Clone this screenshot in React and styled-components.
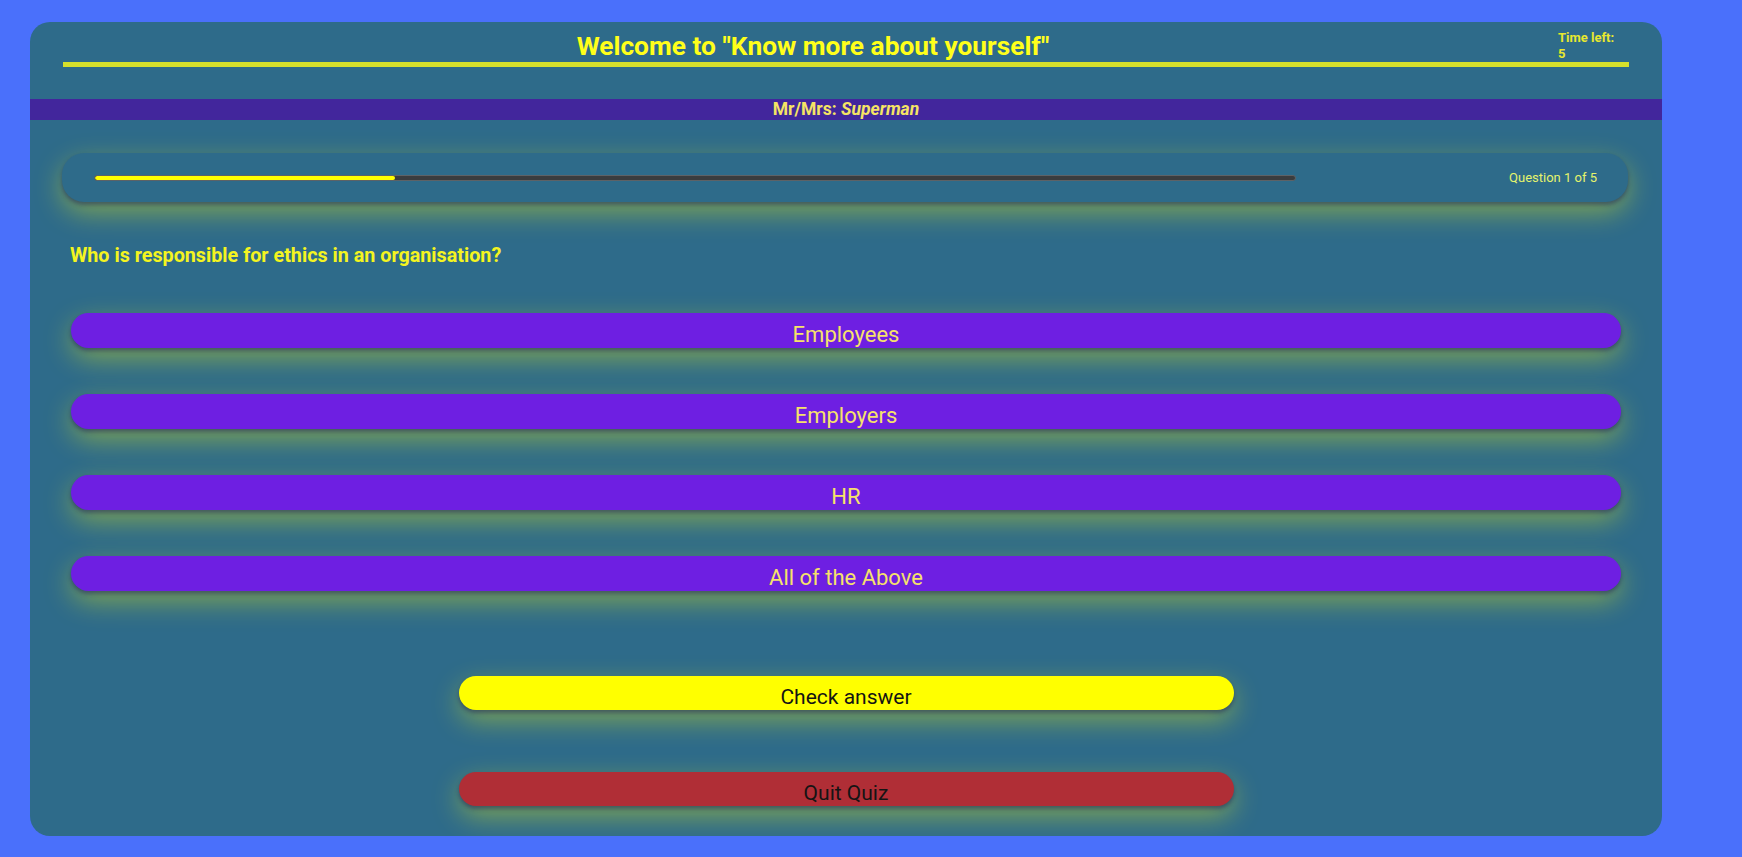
import React from 'react';
import styled, { createGlobalStyle } from 'styled-components';

const GlobalStyle = createGlobalStyle`
  body {
    margin: 0;
    background: #4a70fb;
    font-family: Roboto, "Liberation Sans", Arial, sans-serif;
  }
`;

const glow = `
  box-shadow: 0 3px 4px rgba(20, 20, 90, 0.45), 0 10px 28px rgba(255, 255, 0, 0.4);
`;

const Card = styled.div`
  width: 1632px;
  margin: 22px 0 0 30px;
  padding: 8px 0 30px;
  box-sizing: border-box;
  background: #2e6b8a;
  border-radius: 20px;
`;

const Header = styled.header`
  display: flex;
  align-items: flex-end;
  margin: 0 33px;
  border-bottom: 5px solid #d6e02c;
`;

const Title = styled.h1`
  flex: 1;
  margin: 0;
  padding: 0 0 1px 5px;
  font-size: 26.3px;
  line-height: 30px;
  font-weight: 700;
  color: #ffff1a;
  text-align: center;
`;

const TimeLeft = styled.div`
  width: 71px;
  font-size: 13px;
  line-height: 16px;
  font-weight: 700;
  color: #e8e82e;
`;

const UserBand = styled.div`
  margin-top: 32px;
  height: 21px;
  background: #42269c;
  font-size: 17.5px;
  line-height: 21px;
  font-weight: 700;
  color: #f5e464;
  text-align: center;

  em {
    font-style: italic;
  }
`;

const ProgressCard = styled.div`
  display: flex;
  align-items: center;
  justify-content: space-between;
  height: 49px;
  margin: 33px 34px 0 32px;
  padding: 0 31px 0 32px;
  border-radius: 22px;
  background: #2e6b8a;
  ${glow}
`;

const Track = styled.div`
  width: 80%;
  height: 6px;
  box-sizing: border-box;
  border: 1px solid #5d6266;
  border-radius: 4px;
  background: #3a3c3e;
  overflow: hidden;
`;

const Fill = styled.div`
  height: 100%;
  background: #ffff00;
  border-radius: 4px;
`;

const Counter = styled.span`
  font-size: 13px;
  color: #e6f46c;
`;

const Body = styled.div`
  padding: 0 41px;
`;

const Question = styled.p`
  margin: 42px 0 0 -1px;
  font-size: 19.75px;
  line-height: 23px;
  font-weight: 700;
  color: #f4f420;
`;

const Options = styled.div`
  display: flex;
  flex-direction: column;
  gap: 46px;
  margin-top: 46px;
`;

const Pill = styled.button`
  display: block;
  width: 100%;
  height: 35px;
  padding: 9px 0 0;
  box-sizing: border-box;
  border: none;
  border-radius: 18px;
  background: #6e1fe2;
  font-family: inherit;
  font-size: 22px;
  line-height: 26px;
  color: #f6e26a;
  text-align: center;
  cursor: pointer;
  ${glow}
`;

const Actions = styled.div`
  display: flex;
  flex-direction: column;
  align-items: center;
  gap: 62px;
  margin-top: 85px;
`;

const ActionButton = styled.button`
  width: 50%;
  height: 34px;
  padding: 7px 0 0;
  box-sizing: border-box;
  border: none;
  border-radius: 17px;
  background: ${(p) => (p.$danger ? '#b02e36' : '#ffff00')};
  font-family: inherit;
  font-size: 21px;
  line-height: 26px;
  color: #141414;
  cursor: pointer;
  ${glow}
`;

const answers = ['Employees', 'Employers', 'HR', 'All of the Above'];

const App = () => {
  const progress = 25;
  return (
    <>
      <GlobalStyle />
      <Card>
        <Header>
          <Title>Welcome to "Know more about yourself"</Title>
          <TimeLeft>
            Time left:
            <br />5
          </TimeLeft>
        </Header>

        <UserBand>
          Mr/Mrs: <em>Superman</em>
        </UserBand>

        <ProgressCard>
          <Track>
            <Fill style={{ width: `${progress}%` }} />
          </Track>
          <Counter>Question 1 of 5</Counter>
        </ProgressCard>

        <Body>
          <Question>Who is responsible for ethics in an organisation?</Question>
          <Options>
            {answers.map((a) => (
              <Pill key={a}>{a}</Pill>
            ))}
          </Options>
          <Actions>
            <ActionButton>Check answer</ActionButton>
            <ActionButton $danger>Quit Quiz</ActionButton>
          </Actions>
        </Body>
      </Card>
    </>
  );
};

export default App;
